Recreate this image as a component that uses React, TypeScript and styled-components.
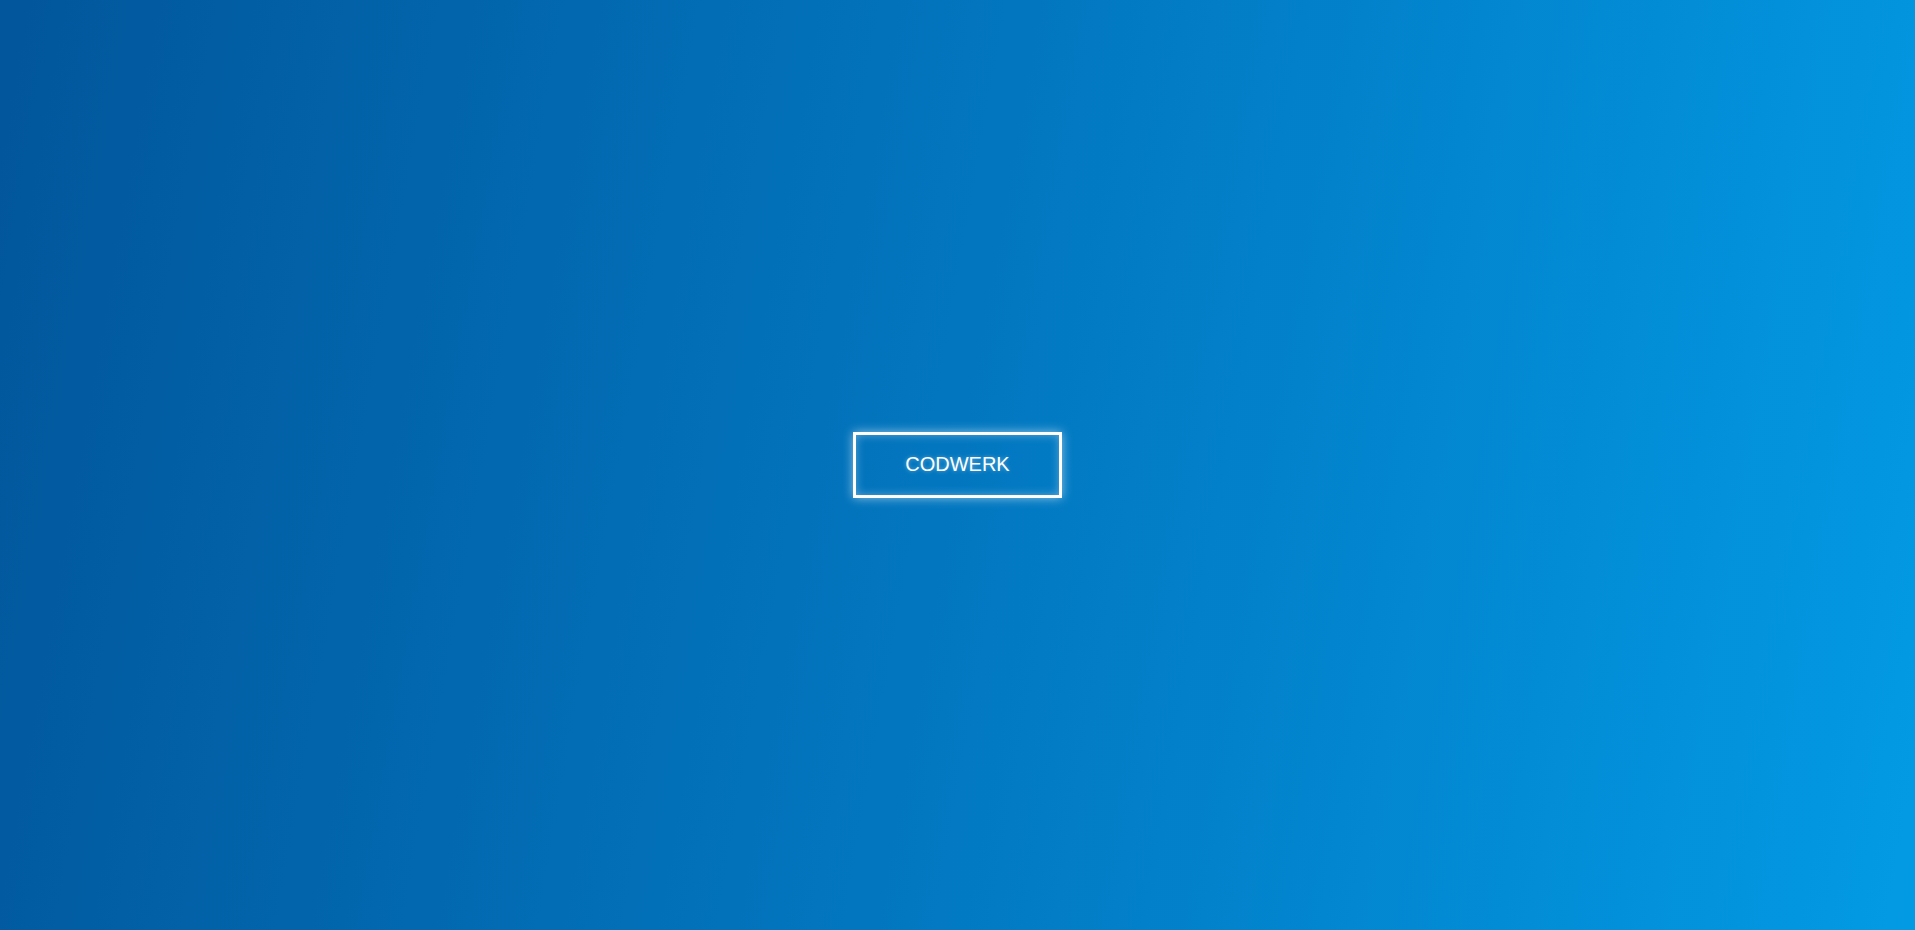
import React from 'react';
import styled, { createGlobalStyle } from 'styled-components';

const GlobalStyle = createGlobalStyle`
  html, body {
    margin: 0;
    padding: 0;
    height: 100%;
  }
  body {
    font-family: 'Liberation Sans', Arial, sans-serif;
  }
  #root {
    height: 100%;
  }
`;

const Page = styled.div`
  display: flex;
  align-items: center;
  justify-content: center;
  width: 100%;
  height: 100vh;
  background: linear-gradient(100deg, #02569b 0%, #0277c0 50%, #039ae4 100%);
`;

const Logo = styled.div`
  padding: 17px 49px 19px;
  border: 3px solid #ffffff;
  color: #ffffff;
  font-size: 20px;
  line-height: 24px;
  box-shadow: 0 0 10px rgba(255, 255, 255, 0.55),
    inset 0 0 10px rgba(255, 255, 255, 0.35);
  text-shadow: 0 0 4px rgba(255, 255, 255, 0.4);
`;

const App = () => (
  <>
    <GlobalStyle />
    <Page>
      <Logo>CODWERK</Logo>
    </Page>
  </>
);

export default App;
